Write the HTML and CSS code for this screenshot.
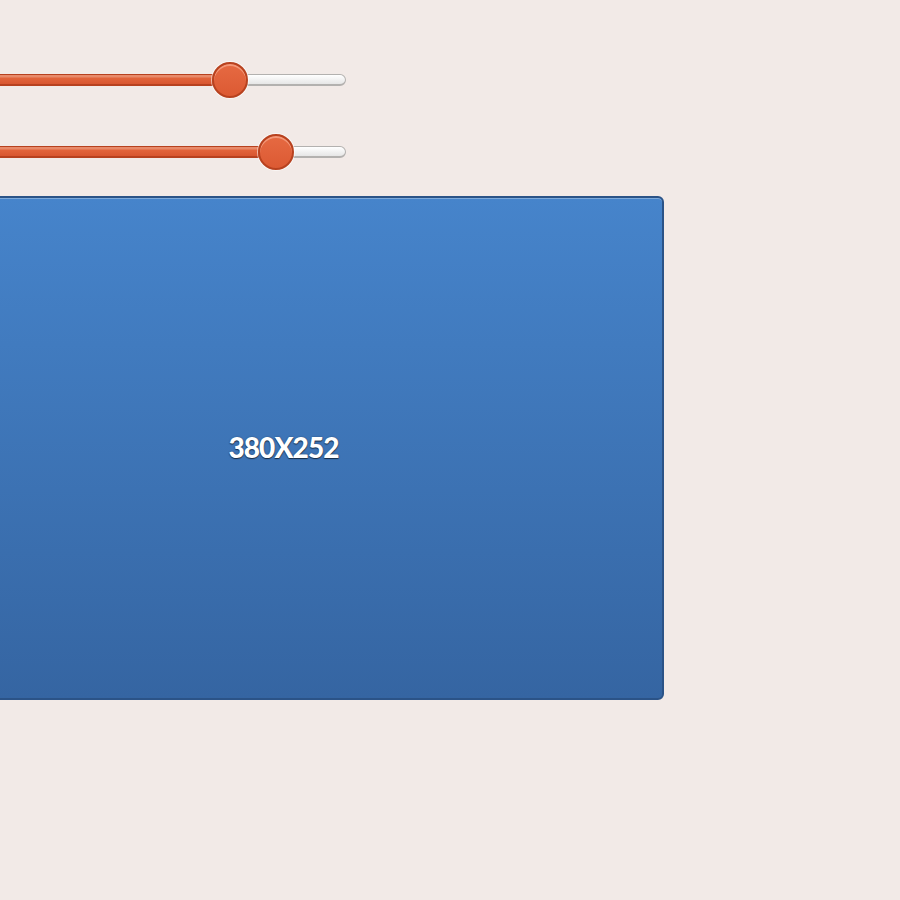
FILE: index.html
```html
<!DOCTYPE html>
<html>
<head>
<meta charset="utf-8">
<link rel="stylesheet" href="styles.css">
</head>
<body>
<div class="page">
  <div class="slider">
    <div class="track">
      <div class="fill" style="width:327px"></div>
      <div class="thumb" style="left:308px"></div>
    </div>
  </div>
  <div class="slider">
    <div class="track">
      <div class="fill" style="width:373px"></div>
      <div class="thumb" style="left:354px"></div>
    </div>
  </div>
  <div class="placeholder"><span class="label">380X252</span></div>
</div>
</body>
</html>
```
FILE: styles.css
```css
html, body {
  margin: 0;
  padding: 0;
  background: #f2eae7;
}
.page {
  margin-left: -97px;
  padding-top: 62px;
  display: flex;
  flex-direction: column;
  gap: 36px;
}
.slider {
  height: 36px;
  width: 443px;
  display: flex;
  align-items: center;
}
.track {
  position: relative;
  width: 443px;
  height: 12px;
  box-sizing: border-box;
  border: 1px solid #b3b1af;
  border-bottom-width: 2px;
  border-radius: 6px;
  background: linear-gradient(#ffffff, #e6e6e6);
}
.fill {
  position: absolute;
  left: -1px;
  top: -1px;
  height: 12px;
  box-sizing: border-box;
  border: 1px solid #b7411f;
  border-bottom-width: 2px;
  border-radius: 6px 0 0 6px;
  background: linear-gradient(#e88a6a 0, #e88a6a 2px, #e2643b 3px, #d85630 100%);
}
.thumb {
  position: absolute;
  top: -13px;
  width: 36px;
  height: 36px;
  box-sizing: border-box;
  border-radius: 50%;
  border: 2px solid #b8421f;
  background: linear-gradient(#e66a42, #dc5a33);
  box-shadow: inset 0 2px 0 rgba(255, 190, 165, 0.55), 0 0 0 1px rgba(255, 255, 255, 0.6);
}
.placeholder {
  margin-top: -10px;
  width: 761px;
  height: 504px;
  box-sizing: border-box;
  border: 2px solid #2b5387;
  border-radius: 6px;
  background: linear-gradient(#4684cb, #3565a2);
  box-shadow: inset 0 1px 0 rgba(255, 255, 255, 0.3);
  display: flex;
  align-items: center;
  justify-content: center;
}
.label {
  font-family: Lato, "Liberation Sans", sans-serif;
  font-weight: 900;
  font-size: 28px;
  letter-spacing: -0.9px;
  margin-top: -3px;
  color: #ffffff;
  text-shadow: 0 1px 1px rgba(0, 0, 0, 0.6), 0 0 2px rgba(0, 0, 0, 0.3);
}
```
